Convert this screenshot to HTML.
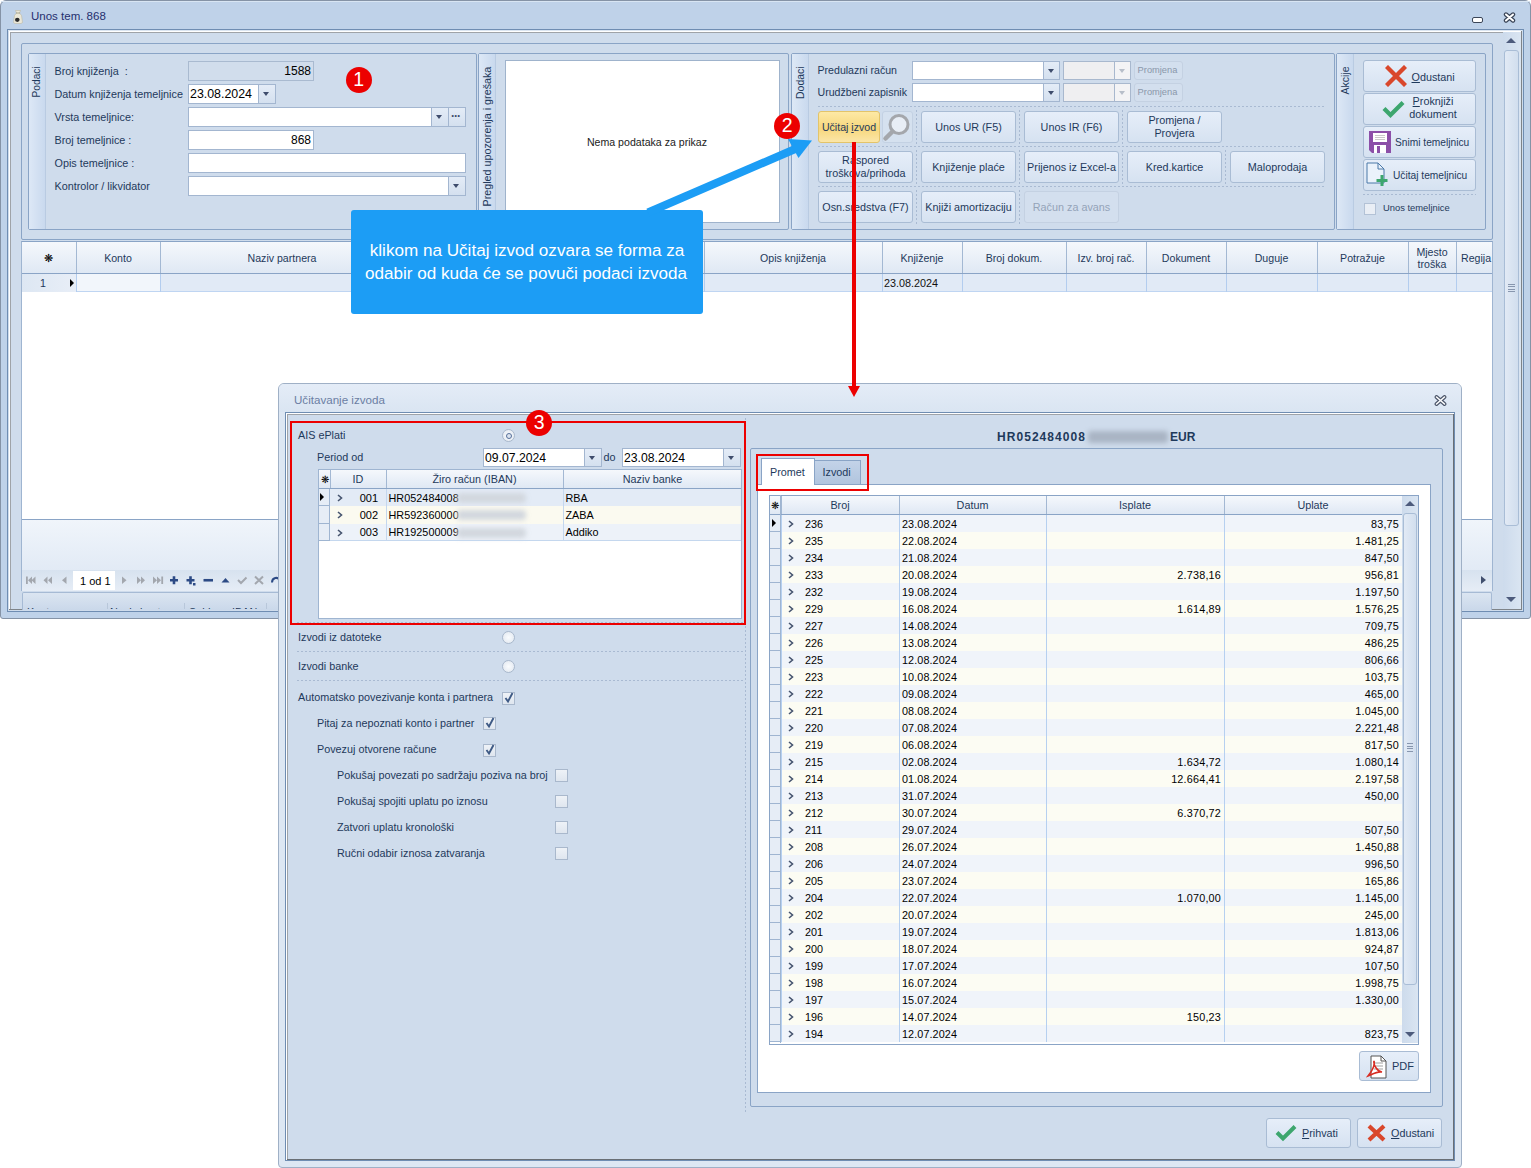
<!DOCTYPE html><html><head><meta charset="utf-8"><style>
*{margin:0;padding:0;box-sizing:border-box}
html,body{width:1531px;height:1168px;overflow:hidden;background:#fff;font-family:"Liberation Sans",sans-serif}
div{position:absolute}
.t{white-space:nowrap}
.btn{border:1px solid #a9bcd4;border-radius:3px;background:linear-gradient(#e6eef9,#d6e2f1)}
.dbtn{border:1px solid #c4d1e2;border-radius:3px;background:#d3dfee}
.side{background:linear-gradient(90deg,#dde8f6,#c9d9ee);border-right:1px solid #b9cbe2}
.inp{background:#fff;border:1px solid #a3b6d0}
.ddb{background:linear-gradient(#e4ecf7,#d4e0ef);border-left:1px solid #a3b6d0}
.tri{width:0;height:0;border-left:3.5px solid transparent;border-right:3.5px solid transparent;border-top:4px solid #3e4c6c}
.hdr{background:linear-gradient(#f5f8fc,#dfe8f4);}
.dashh{height:1px;background:repeating-linear-gradient(90deg,#a9bad2 0 2px,transparent 2px 4px)}
.dashv{width:1px;background:repeating-linear-gradient(180deg,#a9bad2 0 2px,transparent 2px 4px)}
</style></head><body>

<div style="left:0px;top:0px;width:1531px;height:619px;background:#bfd2e9;border:1px solid #8593a6;border-radius:6px 6px 3px 3px;"></div>
<div style="left:1px;top:1px;width:1529px;height:1px;background:#d8e5f3;"></div>
<svg style="position:absolute;left:13px;top:10px" width="10" height="14" viewBox="0 0 10 14"><path d="M2.5 0.5H7.5L6.5 3L8.5 5.5L9.5 12.5L8 13.5H2L0.5 12.5L1.5 5.5L3.5 3Z" fill="#ebe8d8" stroke="#bdb9a3" stroke-width="0.6"/><path d="M3 3H7" stroke="#9b977f" stroke-width="0.8"/><ellipse cx="4.3" cy="9.8" rx="2.3" ry="2.1" fill="#2a2a2a"/></svg>
<div class="t" style="left:31px;top:10.77px;font-size:11.5px;line-height:11.5px;color:#252f6e;">Unos tem. 868</div>
<div style="left:1472px;top:17px;width:11px;height:6px;background:#fff;border:1.3px solid #3b4658;border-radius:2px;"></div>
<svg style="position:absolute;left:1503px;top:12px" width="13" height="11" viewBox="0 0 13 11"><path d="M3 2.5L10 8.5M10 2.5L3 8.5" stroke="#3b4658" stroke-width="4.4" stroke-linecap="round"/><path d="M3 2.5L10 8.5M10 2.5L3 8.5" stroke="#fff" stroke-width="2" stroke-linecap="round"/></svg>
<div style="left:7px;top:29px;width:1517px;height:583px;background:#cfdcec;border:1px solid #6f8db2;"></div>
<div style="left:8px;top:30px;width:1514px;height:1px;background:#dce6f2;"></div>
<div style="left:9px;top:31px;width:1513px;height:1px;background:#fff;"></div>
<div style="left:10px;top:32px;width:1511px;height:1px;background:#9fa3a8;"></div>
<div style="left:9px;top:31px;width:1px;height:579px;background:#fff;"></div>
<div style="left:10px;top:32px;width:1px;height:577px;background:#9fa3a8;"></div>
<div style="left:1521px;top:31px;width:1px;height:579px;background:#7f8489;"></div>
<div style="left:9px;top:609px;width:1513px;height:1px;background:#7f8489;"></div>
<div style="left:21px;top:43px;width:1472px;height:197px;border:1px solid #8aa4c6;border-radius:2px;background:#cfdcec;"></div>
<div style="left:28px;top:53px;width:449px;height:177px;border:1px solid #8aa4c6;border-radius:2px;background:#cfdcec;"></div>
<div class="side" style="left:29px;top:54px;width:17px;height:175px;"></div>
<div class="t" style="left:29px;top:66.5px;width:16px;height:30.5px;"><div class="t" style="left:0;top:0;width:30.5px;height:16px;transform-origin:0 0;transform:translate(-0.5px,30.5px) rotate(-90deg);font-size:10.2px;line-height:16px;color:#1e395b;text-align:right">Podaci</div></div>
<div style="left:478px;top:53px;width:311px;height:177px;border:1px solid #8aa4c6;border-radius:2px;background:#cfdcec;"></div>
<div class="side" style="left:479px;top:54px;width:17px;height:175px;"></div>
<div class="t" style="left:479px;top:66.5px;width:16px;height:139.5px;"><div class="t" style="left:0;top:0;width:139.5px;height:16px;transform-origin:0 0;transform:translate(-0.5px,139.5px) rotate(-90deg);font-size:10.75px;line-height:16px;color:#1e395b;text-align:right">Pregled upozorenja i grešaka</div></div>
<div style="left:791px;top:53px;width:544px;height:177px;border:1px solid #8aa4c6;border-radius:2px;background:#cfdcec;"></div>
<div class="side" style="left:792px;top:54px;width:17px;height:175px;"></div>
<div class="t" style="left:792px;top:66.5px;width:16px;height:32px;"><div class="t" style="left:0;top:0;width:32px;height:16px;transform-origin:0 0;transform:translate(-0.5px,32px) rotate(-90deg);font-size:10.5px;line-height:16px;color:#1e395b;text-align:right">Dodaci</div></div>
<div style="left:1336px;top:53px;width:150px;height:177px;border:1px solid #8aa4c6;border-radius:2px;background:#cfdcec;"></div>
<div class="side" style="left:1337px;top:54px;width:17px;height:175px;"></div>
<div class="t" style="left:1337px;top:66.5px;width:16px;height:27.5px;"><div class="t" style="left:0;top:0;width:27.5px;height:16px;transform-origin:0 0;transform:translate(-0.5px,27.5px) rotate(-90deg);font-size:10.5px;line-height:16px;color:#1e395b;text-align:right">Akcije</div></div>
<div class="t" style="left:54.5px;top:65.86px;font-size:10.8px;line-height:10.8px;color:#1e395b;">Broj knjiženja &nbsp;:</div>
<div class="t" style="left:54.5px;top:88.86px;font-size:10.8px;line-height:10.8px;color:#1e395b;">Datum knjiženja temeljnice</div>
<div class="t" style="left:54.5px;top:111.86px;font-size:10.8px;line-height:10.8px;color:#1e395b;">Vrsta temeljnice:</div>
<div class="t" style="left:54.5px;top:134.86px;font-size:10.8px;line-height:10.8px;color:#1e395b;">Broj temeljnice :</div>
<div class="t" style="left:54.5px;top:157.86px;font-size:10.8px;line-height:10.8px;color:#1e395b;">Opis temeljnice :</div>
<div class="t" style="left:54.5px;top:180.86px;font-size:10.8px;line-height:10.8px;color:#1e395b;">Kontrolor / likvidator</div>
<div style="left:188px;top:61px;width:126px;height:20px;background:#d1ddec;border:1px solid #a9bad0;"></div>
<div class="t" style="left:-89px;width:400px;text-align:right;top:64.84px;font-size:12px;line-height:12px;color:#000;">1588</div>
<div class="inp" style="left:188px;top:84px;width:88px;height:20px;"></div>
<div class="t" style="left:190px;top:87.50px;font-size:12.4px;line-height:12.4px;color:#000;">23.08.2024</div>
<div class="ddb" style="left:258px;top:85px;width:17px;height:18px;"></div>
<div class="tri" style="left:263px;top:92px"></div>
<div class="inp" style="left:188px;top:107px;width:278px;height:20px;"></div>
<div class="ddb" style="left:431px;top:108px;width:17px;height:18px;"></div>
<div class="tri" style="left:436px;top:115px"></div>
<div class="ddb" style="left:448px;top:108px;width:17px;height:18px;"></div>
<div class="t" style="left:451px;top:109.84px;font-size:12px;line-height:12px;color:#3e4c6c;letter-spacing:-1px;font-weight:bold">···</div>
<div class="inp" style="left:188px;top:130px;width:126px;height:20px;"></div>
<div class="t" style="left:-89px;width:400px;text-align:right;top:133.84px;font-size:12px;line-height:12px;color:#000;">868</div>
<div class="inp" style="left:188px;top:153px;width:278px;height:20px;"></div>
<div class="inp" style="left:188px;top:176px;width:278px;height:20px;"></div>
<div class="ddb" style="left:448px;top:177px;width:17px;height:18px;"></div>
<div class="tri" style="left:453px;top:184px"></div>
<div style="left:505px;top:60px;width:275px;height:163px;background:#fff;border:1px solid #9fb3cc;"></div>
<div class="t" style="left:347px;width:600px;text-align:center;top:137.03px;font-size:10.6px;line-height:10.6px;color:#1b1b1b;">Nema podataka za prikaz</div>
<div class="t" style="left:817.5px;top:65.03px;font-size:10.6px;line-height:10.6px;color:#1e395b;">Predulazni račun</div>
<div class="t" style="left:817.5px;top:87.03px;font-size:10.6px;line-height:10.6px;color:#1e395b;">Urudžbeni zapisnik</div>
<div class="inp" style="left:912px;top:61px;width:148px;height:19px;"></div>
<div class="ddb" style="left:1043px;top:62px;width:16px;height:17px;"></div>
<div class="tri" style="left:1047.5px;top:69px"></div>
<div style="left:1063px;top:61px;width:68px;height:19px;background:#efeff1;border:1px solid #a8b8ce;"></div>
<div style="left:1114px;top:62px;width:16px;height:17px;background:#f3f3f5;border-left:1px solid #a8b8ce;"></div>
<div class="tri" style="left:1118.5px;top:69px;border-top-color:#b7bec9"></div>
<div class="dbtn" style="left:1134px;top:61px;width:49px;height:19px;"></div>
<div class="t" style="left:857.5px;width:600px;text-align:center;top:65.93px;font-size:9.3px;line-height:9.3px;color:#8a97aa;">Promjena</div>
<div class="inp" style="left:912px;top:83px;width:148px;height:19px;"></div>
<div class="ddb" style="left:1043px;top:84px;width:16px;height:17px;"></div>
<div class="tri" style="left:1047.5px;top:91px"></div>
<div style="left:1063px;top:83px;width:68px;height:19px;background:#efeff1;border:1px solid #a8b8ce;"></div>
<div style="left:1114px;top:84px;width:16px;height:17px;background:#f3f3f5;border-left:1px solid #a8b8ce;"></div>
<div class="tri" style="left:1118.5px;top:91px;border-top-color:#b7bec9"></div>
<div class="dbtn" style="left:1134px;top:83px;width:49px;height:19px;"></div>
<div class="t" style="left:857.5px;width:600px;text-align:center;top:87.93px;font-size:9.3px;line-height:9.3px;color:#8a97aa;">Promjena</div>
<div class="dashh" style="left:818px;top:106px;width:508px"></div>
<div class="dashh" style="left:818px;top:146px;width:508px"></div>
<div class="dashh" style="left:818px;top:186px;width:508px"></div>
<div class="dashv" style="left:916px;top:110px;height:34px"></div>
<div class="dashv" style="left:1019px;top:110px;height:34px"></div>
<div class="dashv" style="left:1122px;top:110px;height:34px"></div>
<div class="dashv" style="left:916px;top:150px;height:34px"></div>
<div class="dashv" style="left:1019px;top:150px;height:34px"></div>
<div class="dashv" style="left:1122px;top:150px;height:34px"></div>
<div class="dashv" style="left:1225px;top:150px;height:34px"></div>
<div class="dashv" style="left:916px;top:190px;height:34px"></div>
<div class="dashv" style="left:1019px;top:190px;height:34px"></div>
<div style="left:818px;top:111px;width:62px;height:32px;border:1px solid #e3c46a;border-radius:3px;background:linear-gradient(#fde9a6,#f7d77c 55%,#fbe6a8);"></div>
<div class="t" style="left:549px;width:600px;text-align:center;top:122.03px;font-size:10.6px;line-height:10.6px;color:#1e395b;text-decoration:none">Učitaj <u>i</u>zvod</div>
<div style="left:882px;top:111px;width:31px;height:32px;border:1px solid #c3d1e3;border-radius:3px;background:#d5e1ef;"></div>
<svg style="position:absolute;left:882px;top:111px" width="31" height="32" viewBox="0 0 31 32"><circle cx="17" cy="13.5" r="9" fill="#e8eef6" stroke="#a4a7ac" stroke-width="3"/><path d="M10.5 20.5L3.5 27.5" stroke="#a4a7ac" stroke-width="4.5" stroke-linecap="round"/></svg>
<div class="btn" style="left:921px;top:111px;width:95px;height:32px;"></div>
<div class="t" style="left:668.5px;width:600px;text-align:center;top:121.86px;font-size:10.8px;line-height:10.8px;color:#1e395b;">Unos UR (F5)</div>
<div class="btn" style="left:1024px;top:111px;width:95px;height:32px;"></div>
<div class="t" style="left:771.5px;width:600px;text-align:center;top:121.86px;font-size:10.8px;line-height:10.8px;color:#1e395b;">Unos IR (F6)</div>
<div class="btn" style="left:1127px;top:111px;width:95px;height:32px;"></div>
<div class="t" style="left:874.5px;width:600px;text-align:center;top:115.36px;font-size:10.8px;line-height:10.8px;color:#1e395b;">Promjena /</div>
<div class="t" style="left:874.5px;width:600px;text-align:center;top:127.86px;font-size:10.8px;line-height:10.8px;color:#1e395b;">Provjera</div>
<div class="btn" style="left:818px;top:151px;width:95px;height:32px;"></div>
<div class="t" style="left:565.5px;width:600px;text-align:center;top:155.36px;font-size:10.8px;line-height:10.8px;color:#1e395b;">Raspored</div>
<div class="t" style="left:565.5px;width:600px;text-align:center;top:167.86px;font-size:10.8px;line-height:10.8px;color:#1e395b;">troškova/prihoda</div>
<div class="btn" style="left:921px;top:151px;width:95px;height:32px;"></div>
<div class="t" style="left:668.5px;width:600px;text-align:center;top:161.86px;font-size:10.8px;line-height:10.8px;color:#1e395b;">Knjiženje plaće</div>
<div class="btn" style="left:1024px;top:151px;width:95px;height:32px;"></div>
<div class="t" style="left:771.5px;width:600px;text-align:center;top:161.86px;font-size:10.8px;line-height:10.8px;color:#1e395b;">Prijenos iz Excel-a</div>
<div class="btn" style="left:1127px;top:151px;width:95px;height:32px;"></div>
<div class="t" style="left:874.5px;width:600px;text-align:center;top:161.86px;font-size:10.8px;line-height:10.8px;color:#1e395b;">Kred.kartice</div>
<div class="btn" style="left:1230px;top:151px;width:95px;height:32px;"></div>
<div class="t" style="left:977.5px;width:600px;text-align:center;top:161.86px;font-size:10.8px;line-height:10.8px;color:#1e395b;">Maloprodaja</div>
<div class="btn" style="left:818px;top:191px;width:95px;height:32px;"></div>
<div class="t" style="left:565.5px;width:600px;text-align:center;top:201.86px;font-size:10.8px;line-height:10.8px;color:#1e395b;">Osn.sredstva (F7)</div>
<div class="btn" style="left:921px;top:191px;width:95px;height:32px;"></div>
<div class="t" style="left:668.5px;width:600px;text-align:center;top:201.86px;font-size:10.8px;line-height:10.8px;color:#1e395b;">Knjiži amortizaciju</div>
<div class="dbtn" style="left:1024px;top:191px;width:95px;height:32px;"></div>
<div class="t" style="left:771.5px;width:600px;text-align:center;top:201.86px;font-size:10.8px;line-height:10.8px;color:#93a3b8;">Račun za avans</div>
<div class="btn" style="left:1363px;top:60px;width:113px;height:32px;"></div>
<div class="btn" style="left:1363px;top:93px;width:113px;height:32px;"></div>
<div class="btn" style="left:1363px;top:126px;width:113px;height:32px;"></div>
<div class="btn" style="left:1363px;top:159px;width:113px;height:32px;"></div>
<svg style="position:absolute;left:1385px;top:65px" width="22" height="22" viewBox="0 0 22 22"><path d="M3 3L19 19M19 3L3 19" stroke="#d9472b" stroke-width="4.3" stroke-linecap="square"/></svg>
<div class="t" style="left:1411.5px;top:71.86px;font-size:10.8px;line-height:10.8px;color:#1e395b;"><u>O</u>dustani</div>
<svg style="position:absolute;left:1382px;top:100px" width="23" height="18" viewBox="0 0 23 18"><path d="M2 8.5L8.5 15L21 2.5" fill="none" stroke="#3da66e" stroke-width="4.2"/></svg>
<div class="t" style="left:1133px;width:600px;text-align:center;top:96.36px;font-size:10.8px;line-height:10.8px;color:#1e395b;"><u>P</u>roknjiži</div>
<div class="t" style="left:1133px;width:600px;text-align:center;top:108.86px;font-size:10.8px;line-height:10.8px;color:#1e395b;">dokument</div>
<svg style="position:absolute;left:1369px;top:131px" width="22" height="22" viewBox="0 0 22 22"><path d="M0 0H22V22H3L0 19Z" fill="#8c4fa8"/><rect x="4" y="2" width="14" height="9" fill="#fff"/><path d="M6 4.5H16M6 6.5H16M6 8.5H16" stroke="#bbb" stroke-width="0.8"/><rect x="5" y="14" width="12" height="8" fill="#fff"/><rect x="8" y="15" width="3" height="7" fill="#8c4fa8"/></svg>
<div class="t" style="left:1395px;top:137.87px;font-size:10.2px;line-height:10.2px;color:#1e395b;">Snimi temeljnicu</div>
<svg style="position:absolute;left:1366px;top:162px" width="24" height="25" viewBox="0 0 24 25"><path d="M1 1H12L18 7V21H1Z" fill="#eaf2fb" stroke="#4a78a8" stroke-width="1"/><path d="M12 1V7H18" fill="none" stroke="#4a78a8" stroke-width="1"/><path d="M16 13V24M10.5 18.5H21.5" stroke="#3da66e" stroke-width="3"/></svg>
<div class="t" style="left:1393px;top:170.87px;font-size:10.2px;line-height:10.2px;color:#1e395b;">Učitaj temeljnicu</div>
<div class="dashh" style="left:1363px;top:194px;width:113px"></div>
<div style="left:1364px;top:203px;width:12px;height:12px;background:#e9eef5;border:1px solid #b3c2d6;"></div>
<div class="t" style="left:1383px;top:203.04px;font-size:9.4px;line-height:9.4px;color:#1e395b;">Unos temeljnice</div>
<div style="left:1503px;top:32px;width:18px;height:577px;background:linear-gradient(90deg,#cddbec,#dae5f2);"></div>
<div style="left:1506px;top:38px;width:0;height:0;border-left:5.5px solid transparent;border-right:5.5px solid transparent;border-bottom:5px solid #4d5b7c"></div>
<div style="left:1504px;top:50px;width:15px;height:476px;background:linear-gradient(90deg,#e2eaf5,#d1deee);border:1px solid #a9bdd6;border-radius:3px;"></div>
<div style="left:1508px;top:283.5px;width:7px;height:1px;background:#8796ae;"></div>
<div style="left:1508px;top:286.0px;width:7px;height:1px;background:#8796ae;"></div>
<div style="left:1508px;top:288.5px;width:7px;height:1px;background:#8796ae;"></div>
<div style="left:1508px;top:291.0px;width:7px;height:1px;background:#8796ae;"></div>
<div style="left:1506px;top:597px;width:0;height:0;border-left:5.5px solid transparent;border-right:5.5px solid transparent;border-top:5px solid #4d5b7c"></div>
<div style="left:21px;top:241px;width:1472px;height:350px;background:#fff;border:1px solid #9fb5d1;border-top:1px solid #8aa4c6"></div>
<div class="hdr" style="left:22px;top:242px;width:1470px;height:31px;"></div>
<div style="left:22px;top:273px;width:1470px;height:1px;background:#8aa4c6;"></div>
<div style="left:76px;top:242px;width:1px;height:31px;background:#a3b8d3;"></div>
<div style="left:160px;top:242px;width:1px;height:31px;background:#a3b8d3;"></div>
<div style="left:404px;top:242px;width:1px;height:31px;background:#a3b8d3;"></div>
<div style="left:704px;top:242px;width:1px;height:31px;background:#a3b8d3;"></div>
<div style="left:882px;top:242px;width:1px;height:31px;background:#a3b8d3;"></div>
<div style="left:962px;top:242px;width:1px;height:31px;background:#a3b8d3;"></div>
<div style="left:1066px;top:242px;width:1px;height:31px;background:#a3b8d3;"></div>
<div style="left:1146px;top:242px;width:1px;height:31px;background:#a3b8d3;"></div>
<div style="left:1226px;top:242px;width:1px;height:31px;background:#a3b8d3;"></div>
<div style="left:1317px;top:242px;width:1px;height:31px;background:#a3b8d3;"></div>
<div style="left:1408px;top:242px;width:1px;height:31px;background:#a3b8d3;"></div>
<div style="left:1456px;top:242px;width:1px;height:31px;background:#a3b8d3;"></div>
<div class="t" style="left:-251.5px;width:600px;text-align:center;top:252.69px;font-size:11px;line-height:11px;color:#000;">❋</div>
<div class="t" style="left:-182.0px;width:600px;text-align:center;top:253.03px;font-size:10.6px;line-height:10.6px;color:#1e395b;">Konto</div>
<div class="t" style="left:-18.0px;width:600px;text-align:center;top:253.03px;font-size:10.6px;line-height:10.6px;color:#1e395b;">Naziv partnera</div>
<div class="t" style="left:493.0px;width:600px;text-align:center;top:253.03px;font-size:10.6px;line-height:10.6px;color:#1e395b;">Opis knjiženja</div>
<div class="t" style="left:622.0px;width:600px;text-align:center;top:253.03px;font-size:10.6px;line-height:10.6px;color:#1e395b;">Knjiženje</div>
<div class="t" style="left:714.0px;width:600px;text-align:center;top:253.03px;font-size:10.6px;line-height:10.6px;color:#1e395b;">Broj dokum.</div>
<div class="t" style="left:806.0px;width:600px;text-align:center;top:253.03px;font-size:10.6px;line-height:10.6px;color:#1e395b;">Izv. broj rač.</div>
<div class="t" style="left:886.0px;width:600px;text-align:center;top:253.03px;font-size:10.6px;line-height:10.6px;color:#1e395b;">Dokument</div>
<div class="t" style="left:971.5px;width:600px;text-align:center;top:253.03px;font-size:10.6px;line-height:10.6px;color:#1e395b;">Duguje</div>
<div class="t" style="left:1062.5px;width:600px;text-align:center;top:253.03px;font-size:10.6px;line-height:10.6px;color:#1e395b;">Potražuje</div>
<div class="t" style="left:1461px;top:253.03px;font-size:10.6px;line-height:10.6px;color:#1e395b;">Regija</div>
<div class="t" style="left:1132px;width:600px;text-align:center;top:247.03px;font-size:10.6px;line-height:10.6px;color:#1e395b;">Mjesto</div>
<div class="t" style="left:1132px;width:600px;text-align:center;top:259.03px;font-size:10.6px;line-height:10.6px;color:#1e395b;">troška</div>
<div style="left:22px;top:274px;width:1470px;height:18px;background:#e1eaf6;border-bottom:1px solid #bfd5f2"></div>
<div style="left:22px;top:274px;width:54px;height:18px;background:linear-gradient(90deg,#dde7f3,#e8eef7);"></div>
<div style="left:77px;top:274px;width:83px;height:17px;background:#f2f6fb;"></div>
<div style="left:76px;top:274px;width:1px;height:18px;background:#b3cdef;"></div>
<div style="left:160px;top:274px;width:1px;height:18px;background:#b3cdef;"></div>
<div style="left:404px;top:274px;width:1px;height:18px;background:#b3cdef;"></div>
<div style="left:704px;top:274px;width:1px;height:18px;background:#b3cdef;"></div>
<div style="left:882px;top:274px;width:1px;height:18px;background:#b3cdef;"></div>
<div style="left:962px;top:274px;width:1px;height:18px;background:#b3cdef;"></div>
<div style="left:1066px;top:274px;width:1px;height:18px;background:#b3cdef;"></div>
<div style="left:1146px;top:274px;width:1px;height:18px;background:#b3cdef;"></div>
<div style="left:1226px;top:274px;width:1px;height:18px;background:#b3cdef;"></div>
<div style="left:1317px;top:274px;width:1px;height:18px;background:#b3cdef;"></div>
<div style="left:1408px;top:274px;width:1px;height:18px;background:#b3cdef;"></div>
<div style="left:1456px;top:274px;width:1px;height:18px;background:#b3cdef;"></div>
<div class="t" style="left:40px;top:278.03px;font-size:10.6px;line-height:10.6px;color:#1e395b;">1</div>
<div style="left:70px;top:279px;width:0;height:0;border-top:4px solid transparent;border-bottom:4px solid transparent;border-left:4px solid #000"></div>
<div class="t" style="left:884px;top:277.86px;font-size:10.8px;line-height:10.8px;color:#111;">23.08.2024</div>
<div style="left:22px;top:519px;width:1470px;height:1px;background:#8aa4c6;"></div>
<div style="left:22px;top:520px;width:1470px;height:71px;background:linear-gradient(#f0f5fb,#dfe8f4 85%,#d3dfee);"></div>
<div style="left:22px;top:570px;width:1470px;height:21px;background:linear-gradient(#d7e2ef,#e6edf6);"></div>
<div style="left:73px;top:571px;width:42px;height:19px;background:#fff;"></div>
<div class="t" style="left:80px;top:575.69px;font-size:11px;line-height:11px;color:#000;">1 od 1</div>
<svg style="position:absolute;left:22px;top:570px" width="262" height="21" viewBox="0 0 262 21">
<rect x="4" y="6.5" width="1.8" height="7.5" fill="#a3a7ae"/><path d="M10 6.5V14L6 10.25Z M13.5 6.5V14L9.5 10.25Z" fill="#a3a7ae"/>
<path d="M25.5 6.5V14L21.5 10.25Z M30 6.5V14L26 10.25Z" fill="#a3a7ae"/>
<path d="M44.5 6.5V14L40 10.25Z" fill="#a3a7ae"/>
<path d="M100 6.5V14L104.5 10.25Z" fill="#a3a7ae"/>
<path d="M115 6.5V14L119 10.25Z M119 6.5V14L123 10.25Z" fill="#a3a7ae"/>
<path d="M131 6.5V14L135 10.25Z M135 6.5V14L139 10.25Z" fill="#a3a7ae"/><rect x="139.3" y="6.5" width="1.8" height="7.5" fill="#a3a7ae"/>
<path d="M148 10.25H156M152 6.25V14.25" stroke="#2c4a85" stroke-width="2.6"/>
<path d="M164.5 10.25H172.5M168.5 6.25V14.25" stroke="#2c4a85" stroke-width="2.6"/><rect x="171" y="13" width="2.5" height="2.5" fill="#2c4a85"/>
<path d="M181.5 10.25H191" stroke="#2c4a85" stroke-width="2.6"/>
<path d="M199.5 12.5L203.5 8L207.5 12.5Z" fill="#2c4a85"/>
<path d="M216 10L219 13L224.5 7.5" fill="none" stroke="#a3a7ae" stroke-width="2"/>
<path d="M233 6.5L241 14M241 6.5L233 14" stroke="#a3a7ae" stroke-width="2"/>
<path d="M250 12.5C250 7.5 256 6.5 258 10" fill="none" stroke="#2c4a85" stroke-width="2"/><path d="M256 11L260.5 11.5L259.5 7Z" fill="#2c4a85"/>
</svg>
<div style="left:1481px;top:576px;width:0;height:0;border-top:4.5px solid transparent;border-bottom:4.5px solid transparent;border-left:5px solid #414f6e"></div>
<div style="left:22px;top:592px;width:1470px;height:18px;background:linear-gradient(#dbe5f1,#cad8ea);border:1px solid #a6bad4;border-bottom:none;border-radius:2px 2px 0 0;"></div>
<div style="left:22px;top:607px;width:1470px;height:2px;overflow:hidden"><div class="t" style="left:5px;top:-1px;font-size:10.8px;line-height:12px;color:#1e395b">Konto</div><div class="t" style="left:88px;top:-1px;font-size:10.8px;line-height:12px;color:#1e395b">Naziv konta</div><div class="t" style="left:167px;top:-1px;font-size:10.8px;line-height:12px;color:#1e395b">Saldo</div><div class="t" style="left:210px;top:-1px;font-size:10.8px;line-height:12px;color:#1e395b">IBAN</div></div>
<div style="left:107px;top:603px;width:1px;height:6px;background:#b8c7da;"></div>
<div style="left:184px;top:603px;width:1px;height:6px;background:#b8c7da;"></div>
<div style="left:266px;top:603px;width:1px;height:6px;background:#b8c7da;"></div>
<div style="left:278px;top:383px;width:1184px;height:785px;background:#dde7f3;border:1px solid #9fb0c6;border-radius:6px 6px 4px 4px;"></div>
<div style="left:279px;top:384px;width:1182px;height:28px;background:linear-gradient(#e4ecf7,#dae5f2);border-radius:5px 5px 0 0;"></div>
<div class="t" style="left:294px;top:394.18px;font-size:11.6px;line-height:11.6px;color:#6b7ea3;">Učitavanje izvoda</div>
<svg style="position:absolute;left:1434px;top:395px" width="13" height="11" viewBox="0 0 13 11"><path d="M2.5 2L10.5 9M10.5 2L2.5 9" stroke="#4a5468" stroke-width="3.8" stroke-linecap="round"/><path d="M2.5 2L10.5 9M10.5 2L2.5 9" stroke="#fff" stroke-width="1.6" stroke-linecap="round"/></svg>
<div style="left:285px;top:412px;width:1170px;height:749px;background:#cfdcec;border:1px solid #6f8db2;"></div>
<div style="left:286px;top:413px;width:1168px;height:1px;background:#fff;"></div>
<div style="left:286px;top:414px;width:1168px;height:1px;background:#9fa3a8;"></div>
<div style="left:286px;top:413px;width:1px;height:747px;background:#fff;"></div>
<div style="left:287px;top:414px;width:1px;height:746px;background:#9fa3a8;"></div>
<div style="left:1453px;top:414px;width:1px;height:746px;background:#6a6f75;"></div>
<div style="left:287px;top:1159px;width:1167px;height:1px;background:#6a6f75;"></div>
<div class="t" style="left:298px;top:429.86px;font-size:10.8px;line-height:10.8px;color:#1e395b;">AIS ePlati</div>
<div style="left:502.0px;top:429.0px;width:13px;height:13px;border-radius:50%;border:1px solid #a9b8cc;background:radial-gradient(#fafcfe,#dfe6ef)"></div>
<div style="left:505.5px;top:432.5px;width:6px;height:6px;border-radius:50%;border:1.3px solid #56709a;background:#dbe4f0"></div>
<div class="t" style="left:317px;top:451.86px;font-size:10.8px;line-height:10.8px;color:#1e395b;">Period od</div>
<div class="inp" style="left:483px;top:448px;width:119px;height:19px;"></div>
<div class="ddb" style="left:584px;top:449px;width:17px;height:17px;"></div>
<div class="tri" style="left:589px;top:456px"></div>
<div class="inp" style="left:622px;top:448px;width:119px;height:19px;"></div>
<div class="ddb" style="left:723px;top:449px;width:17px;height:17px;"></div>
<div class="tri" style="left:728px;top:456px"></div>
<div class="t" style="left:485px;top:451.67px;font-size:12.2px;line-height:12.2px;color:#000;">09.07.2024</div>
<div class="t" style="left:603.5px;top:451.86px;font-size:10.8px;line-height:10.8px;color:#1e395b;">do</div>
<div class="t" style="left:624px;top:451.67px;font-size:12.2px;line-height:12.2px;color:#000;">23.08.2024</div>
<div style="left:318px;top:469px;width:424px;height:150px;background:#fff;border:1px solid #9fb5d1;"></div>
<div class="hdr" style="left:319px;top:470px;width:422px;height:18px;"></div>
<div style="left:319px;top:488px;width:422px;height:1px;background:#8aa4c6;"></div>
<div style="left:330px;top:470px;width:1px;height:18px;background:#a3b8d3;"></div>
<div style="left:386px;top:470px;width:1px;height:18px;background:#a3b8d3;"></div>
<div style="left:563px;top:470px;width:1px;height:18px;background:#a3b8d3;"></div>
<div class="t" style="left:24.5px;width:600px;text-align:center;top:474.54px;font-size:10px;line-height:10px;color:#000;">❋</div>
<div class="t" style="left:58px;width:600px;text-align:center;top:473.86px;font-size:10.8px;line-height:10.8px;color:#1e395b;">ID</div>
<div class="t" style="left:174.5px;width:600px;text-align:center;top:473.86px;font-size:10.8px;line-height:10.8px;color:#1e395b;">Žiro račun (IBAN)</div>
<div class="t" style="left:352.5px;width:600px;text-align:center;top:473.86px;font-size:10.8px;line-height:10.8px;color:#1e395b;">Naziv banke</div>
<div style="left:330px;top:489.0px;width:411px;height:17.3px;background:#e3ebf6;"></div>
<div style="left:319px;top:489.0px;width:11px;height:17.3px;background:#e6edf6;border-bottom:1px solid #9fb5d1;border-right:1px solid #9fb5d1;"></div>
<div style="left:386px;top:489.0px;width:1px;height:17.3px;background:#c4d7ee;"></div>
<div style="left:563px;top:489.0px;width:1px;height:17.3px;background:#c4d7ee;"></div>
<svg style="position:absolute;left:337px;top:494.0px" width="6" height="8" viewBox="0 0 6 8"><path d="M1 1L4.5 4L1 7" fill="none" stroke="#46546f" stroke-width="1.6"/></svg>
<div class="t" style="left:-22px;width:400px;text-align:right;top:492.69px;font-size:11px;line-height:11px;color:#000;">001</div>
<div class="t" style="left:388.5px;top:492.86px;font-size:10.8px;line-height:10.8px;color:#000;letter-spacing:0.05px">HR052484008</div>
<div style="left:457px;top:493.0px;width:69px;height:10px;background:#d2d7de;filter:blur(2.5px);border-radius:4px"></div>
<div class="t" style="left:565.5px;top:492.86px;font-size:10.8px;line-height:10.8px;color:#000;">RBA</div>
<div style="left:330px;top:506.3px;width:411px;height:17.3px;background:#fbfaf0;"></div>
<div style="left:319px;top:506.3px;width:11px;height:17.3px;background:#e6edf6;border-bottom:1px solid #9fb5d1;border-right:1px solid #9fb5d1;"></div>
<div style="left:386px;top:506.3px;width:1px;height:17.3px;background:#c4d7ee;"></div>
<div style="left:563px;top:506.3px;width:1px;height:17.3px;background:#c4d7ee;"></div>
<svg style="position:absolute;left:337px;top:511.3px" width="6" height="8" viewBox="0 0 6 8"><path d="M1 1L4.5 4L1 7" fill="none" stroke="#46546f" stroke-width="1.6"/></svg>
<div class="t" style="left:-22px;width:400px;text-align:right;top:509.99px;font-size:11px;line-height:11px;color:#000;">002</div>
<div class="t" style="left:388.5px;top:510.16px;font-size:10.8px;line-height:10.8px;color:#000;letter-spacing:0.05px">HR592360000</div>
<div style="left:457px;top:510.3px;width:69px;height:10px;background:#d2d7de;filter:blur(2.5px);border-radius:4px"></div>
<div class="t" style="left:565.5px;top:510.16px;font-size:10.8px;line-height:10.8px;color:#000;">ZABA</div>
<div style="left:330px;top:523.6px;width:411px;height:17.3px;background:#edf2f9;"></div>
<div style="left:319px;top:523.6px;width:11px;height:17.3px;background:#e6edf6;border-bottom:1px solid #9fb5d1;border-right:1px solid #9fb5d1;"></div>
<div style="left:386px;top:523.6px;width:1px;height:17.3px;background:#c4d7ee;"></div>
<div style="left:563px;top:523.6px;width:1px;height:17.3px;background:#c4d7ee;"></div>
<svg style="position:absolute;left:337px;top:528.6px" width="6" height="8" viewBox="0 0 6 8"><path d="M1 1L4.5 4L1 7" fill="none" stroke="#46546f" stroke-width="1.6"/></svg>
<div class="t" style="left:-22px;width:400px;text-align:right;top:527.29px;font-size:11px;line-height:11px;color:#000;">003</div>
<div class="t" style="left:388.5px;top:527.46px;font-size:10.8px;line-height:10.8px;color:#000;letter-spacing:0.05px">HR192500009</div>
<div style="left:457px;top:527.6px;width:69px;height:10px;background:#d2d7de;filter:blur(2.5px);border-radius:4px"></div>
<div class="t" style="left:565.5px;top:527.46px;font-size:10.8px;line-height:10.8px;color:#000;">Addiko</div>
<div style="left:330px;top:540px;width:411px;height:1px;background:#c4d7ee;"></div>
<div style="left:320px;top:493px;width:0;height:0;border-top:4px solid transparent;border-bottom:4px solid transparent;border-left:4px solid #000"></div>
<div class="dashh" style="left:297px;top:622px;width:448px"></div>
<div class="dashh" style="left:297px;top:651px;width:448px"></div>
<div class="dashh" style="left:297px;top:680px;width:448px"></div>
<div class="dashv" style="left:745px;top:418px;height:694px"></div>
<div class="t" style="left:298px;top:631.86px;font-size:10.8px;line-height:10.8px;color:#1e395b;">Izvodi iz datoteke</div>
<div style="left:502.0px;top:631.0px;width:13px;height:13px;border-radius:50%;border:1px solid #a9b8cc;background:radial-gradient(#fafcfe,#dfe6ef)"></div>
<div class="t" style="left:298px;top:660.86px;font-size:10.8px;line-height:10.8px;color:#1e395b;">Izvodi banke</div>
<div style="left:502.0px;top:660.0px;width:13px;height:13px;border-radius:50%;border:1px solid #a9b8cc;background:radial-gradient(#fafcfe,#dfe6ef)"></div>
<div class="t" style="left:298px;top:691.86px;font-size:10.8px;line-height:10.8px;color:#1e395b;">Automatsko povezivanje konta i partnera</div>
<div style="left:502px;top:691.5px;width:13px;height:13px;border:1px solid #a9b8cc;background:linear-gradient(#eef2f7,#dfe6ef)"></div>
<svg style="position:absolute;left:503px;top:690.5px" width="12" height="13" viewBox="0 0 12 13"><path d="M2.5 7L5 10.5L9.5 2" fill="none" stroke="#3e5a85" stroke-width="1.9"/></svg>
<div class="t" style="left:317px;top:717.86px;font-size:10.8px;line-height:10.8px;color:#1e395b;">Pitaj za nepoznati konto i partner</div>
<div style="left:483px;top:717px;width:13px;height:13px;border:1px solid #a9b8cc;background:linear-gradient(#eef2f7,#dfe6ef)"></div>
<svg style="position:absolute;left:484px;top:716px" width="12" height="13" viewBox="0 0 12 13"><path d="M2.5 7L5 10.5L9.5 2" fill="none" stroke="#3e5a85" stroke-width="1.9"/></svg>
<div class="t" style="left:317px;top:743.86px;font-size:10.8px;line-height:10.8px;color:#1e395b;">Povezuj otvorene račune</div>
<div style="left:483px;top:743.5px;width:13px;height:13px;border:1px solid #a9b8cc;background:linear-gradient(#eef2f7,#dfe6ef)"></div>
<svg style="position:absolute;left:484px;top:742.5px" width="12" height="13" viewBox="0 0 12 13"><path d="M2.5 7L5 10.5L9.5 2" fill="none" stroke="#3e5a85" stroke-width="1.9"/></svg>
<div class="t" style="left:337px;top:769.86px;font-size:10.8px;line-height:10.8px;color:#1e395b;">Pokušaj povezati po sadržaju poziva na broj</div>
<div style="left:555px;top:769px;width:13px;height:13px;border:1px solid #a9b8cc;background:linear-gradient(#eef2f7,#dfe6ef)"></div>
<div class="t" style="left:337px;top:795.86px;font-size:10.8px;line-height:10.8px;color:#1e395b;">Pokušaj spojiti uplatu po iznosu</div>
<div style="left:555px;top:795px;width:13px;height:13px;border:1px solid #a9b8cc;background:linear-gradient(#eef2f7,#dfe6ef)"></div>
<div class="t" style="left:337px;top:821.86px;font-size:10.8px;line-height:10.8px;color:#1e395b;">Zatvori uplatu kronološki</div>
<div style="left:555px;top:821px;width:13px;height:13px;border:1px solid #a9b8cc;background:linear-gradient(#eef2f7,#dfe6ef)"></div>
<div class="t" style="left:337px;top:847.86px;font-size:10.8px;line-height:10.8px;color:#1e395b;">Ručni odabir iznosa zatvaranja</div>
<div style="left:555px;top:847px;width:13px;height:13px;border:1px solid #a9b8cc;background:linear-gradient(#eef2f7,#dfe6ef)"></div>
<div class="t" style="left:997px;top:430.84px;font-size:12px;line-height:12px;color:#1e395b;font-weight:bold;letter-spacing:1.05px">HR052484008</div>
<div style="left:1088px;top:431px;width:80px;height:12px;background:#a9b4c4;filter:blur(2.5px);border-radius:3px"></div>
<div class="t" style="left:1170px;top:430.84px;font-size:12px;line-height:12px;color:#1e395b;font-weight:bold;">EUR</div>
<div style="left:750px;top:448px;width:693px;height:659px;border:1px solid #8aa4c6;border-radius:2px;"></div>
<div style="left:814px;top:460px;width:47px;height:25px;background:linear-gradient(#c3d3e8,#b0c4de);border:1px solid #8aa4c6;border-bottom:none;"></div>
<div class="t" style="left:822.5px;top:467.36px;font-size:10.8px;line-height:10.8px;color:#1e395b;">Izvodi</div>
<div style="left:757px;top:484px;width:674px;height:609px;background:#fff;border:1px solid #8aa4c6;"></div>
<div style="left:761px;top:458px;width:54px;height:27px;background:#fff;border:1px solid #8aa4c6;border-bottom:none;"></div>
<div class="t" style="left:770px;top:466.86px;font-size:10.8px;line-height:10.8px;color:#1e395b;">Promet</div>
<div style="left:769px;top:495px;width:650px;height:550px;background:#fff;border:1px solid #8aa4c6;"></div>
<div class="hdr" style="left:770px;top:496px;width:632px;height:18px;"></div>
<div style="left:770px;top:514px;width:632px;height:1px;background:#8aa4c6;"></div>
<div style="left:781px;top:496px;width:1px;height:18px;background:#a3b8d3;"></div>
<div style="left:899px;top:496px;width:1px;height:18px;background:#a3b8d3;"></div>
<div style="left:1046px;top:496px;width:1px;height:18px;background:#a3b8d3;"></div>
<div style="left:1224px;top:496px;width:1px;height:18px;background:#a3b8d3;"></div>
<div class="t" style="left:475px;width:600px;text-align:center;top:500.54px;font-size:10px;line-height:10px;color:#000;">❋</div>
<div class="t" style="left:540px;width:600px;text-align:center;top:499.86px;font-size:10.8px;line-height:10.8px;color:#1e395b;">Broj</div>
<div class="t" style="left:672.5px;width:600px;text-align:center;top:499.86px;font-size:10.8px;line-height:10.8px;color:#1e395b;">Datum</div>
<div class="t" style="left:835px;width:600px;text-align:center;top:499.86px;font-size:10.8px;line-height:10.8px;color:#1e395b;">Isplate</div>
<div class="t" style="left:1013px;width:600px;text-align:center;top:499.86px;font-size:10.8px;line-height:10.8px;color:#1e395b;">Uplate</div>
<div style="left:781px;top:515px;width:621px;height:17px;background:#f0f4fa;"></div>
<div style="left:770px;top:515px;width:11px;height:17px;background:#e6edf6;border-bottom:1px solid #9fb5d1;"></div>
<div style="left:781px;top:515px;width:1px;height:17px;background:#b6d0f0;"></div>
<div style="left:899px;top:515px;width:1px;height:17px;background:#b6d0f0;"></div>
<div style="left:1046px;top:515px;width:1px;height:17px;background:#b6d0f0;"></div>
<div style="left:1224px;top:515px;width:1px;height:17px;background:#b6d0f0;"></div>
<svg style="position:absolute;left:788px;top:520px" width="6" height="8" viewBox="0 0 6 8"><path d="M1 1L4.5 4L1 7" fill="none" stroke="#46546f" stroke-width="1.6"/></svg>
<div class="t" style="left:805px;top:518.86px;font-size:10.8px;line-height:10.8px;color:#000;">236</div>
<div class="t" style="left:902px;top:518.86px;font-size:10.8px;line-height:10.8px;color:#000;letter-spacing:0.1px">23.08.2024</div>
<div class="t" style="left:999px;width:400px;text-align:right;top:518.86px;font-size:10.8px;line-height:10.8px;color:#000;letter-spacing:0.2px">83,75</div>
<div style="left:781px;top:532px;width:621px;height:17px;background:#fcfcf3;"></div>
<div style="left:770px;top:532px;width:11px;height:17px;background:#e6edf6;border-bottom:1px solid #9fb5d1;"></div>
<div style="left:781px;top:532px;width:1px;height:17px;background:#b6d0f0;"></div>
<div style="left:899px;top:532px;width:1px;height:17px;background:#b6d0f0;"></div>
<div style="left:1046px;top:532px;width:1px;height:17px;background:#b6d0f0;"></div>
<div style="left:1224px;top:532px;width:1px;height:17px;background:#b6d0f0;"></div>
<svg style="position:absolute;left:788px;top:537px" width="6" height="8" viewBox="0 0 6 8"><path d="M1 1L4.5 4L1 7" fill="none" stroke="#46546f" stroke-width="1.6"/></svg>
<div class="t" style="left:805px;top:535.86px;font-size:10.8px;line-height:10.8px;color:#000;">235</div>
<div class="t" style="left:902px;top:535.86px;font-size:10.8px;line-height:10.8px;color:#000;letter-spacing:0.1px">22.08.2024</div>
<div class="t" style="left:999px;width:400px;text-align:right;top:535.86px;font-size:10.8px;line-height:10.8px;color:#000;letter-spacing:0.2px">1.481,25</div>
<div style="left:781px;top:549px;width:621px;height:17px;background:#f0f4fa;"></div>
<div style="left:770px;top:549px;width:11px;height:17px;background:#e6edf6;border-bottom:1px solid #9fb5d1;"></div>
<div style="left:781px;top:549px;width:1px;height:17px;background:#b6d0f0;"></div>
<div style="left:899px;top:549px;width:1px;height:17px;background:#b6d0f0;"></div>
<div style="left:1046px;top:549px;width:1px;height:17px;background:#b6d0f0;"></div>
<div style="left:1224px;top:549px;width:1px;height:17px;background:#b6d0f0;"></div>
<svg style="position:absolute;left:788px;top:554px" width="6" height="8" viewBox="0 0 6 8"><path d="M1 1L4.5 4L1 7" fill="none" stroke="#46546f" stroke-width="1.6"/></svg>
<div class="t" style="left:805px;top:552.86px;font-size:10.8px;line-height:10.8px;color:#000;">234</div>
<div class="t" style="left:902px;top:552.86px;font-size:10.8px;line-height:10.8px;color:#000;letter-spacing:0.1px">21.08.2024</div>
<div class="t" style="left:999px;width:400px;text-align:right;top:552.86px;font-size:10.8px;line-height:10.8px;color:#000;letter-spacing:0.2px">847,50</div>
<div style="left:781px;top:566px;width:621px;height:17px;background:#fcfcf3;"></div>
<div style="left:770px;top:566px;width:11px;height:17px;background:#e6edf6;border-bottom:1px solid #9fb5d1;"></div>
<div style="left:781px;top:566px;width:1px;height:17px;background:#b6d0f0;"></div>
<div style="left:899px;top:566px;width:1px;height:17px;background:#b6d0f0;"></div>
<div style="left:1046px;top:566px;width:1px;height:17px;background:#b6d0f0;"></div>
<div style="left:1224px;top:566px;width:1px;height:17px;background:#b6d0f0;"></div>
<svg style="position:absolute;left:788px;top:571px" width="6" height="8" viewBox="0 0 6 8"><path d="M1 1L4.5 4L1 7" fill="none" stroke="#46546f" stroke-width="1.6"/></svg>
<div class="t" style="left:805px;top:569.86px;font-size:10.8px;line-height:10.8px;color:#000;">233</div>
<div class="t" style="left:902px;top:569.86px;font-size:10.8px;line-height:10.8px;color:#000;letter-spacing:0.1px">20.08.2024</div>
<div class="t" style="left:821px;width:400px;text-align:right;top:569.86px;font-size:10.8px;line-height:10.8px;color:#000;letter-spacing:0.2px">2.738,16</div>
<div class="t" style="left:999px;width:400px;text-align:right;top:569.86px;font-size:10.8px;line-height:10.8px;color:#000;letter-spacing:0.2px">956,81</div>
<div style="left:781px;top:583px;width:621px;height:17px;background:#f0f4fa;"></div>
<div style="left:770px;top:583px;width:11px;height:17px;background:#e6edf6;border-bottom:1px solid #9fb5d1;"></div>
<div style="left:781px;top:583px;width:1px;height:17px;background:#b6d0f0;"></div>
<div style="left:899px;top:583px;width:1px;height:17px;background:#b6d0f0;"></div>
<div style="left:1046px;top:583px;width:1px;height:17px;background:#b6d0f0;"></div>
<div style="left:1224px;top:583px;width:1px;height:17px;background:#b6d0f0;"></div>
<svg style="position:absolute;left:788px;top:588px" width="6" height="8" viewBox="0 0 6 8"><path d="M1 1L4.5 4L1 7" fill="none" stroke="#46546f" stroke-width="1.6"/></svg>
<div class="t" style="left:805px;top:586.86px;font-size:10.8px;line-height:10.8px;color:#000;">232</div>
<div class="t" style="left:902px;top:586.86px;font-size:10.8px;line-height:10.8px;color:#000;letter-spacing:0.1px">19.08.2024</div>
<div class="t" style="left:999px;width:400px;text-align:right;top:586.86px;font-size:10.8px;line-height:10.8px;color:#000;letter-spacing:0.2px">1.197,50</div>
<div style="left:781px;top:600px;width:621px;height:17px;background:#fcfcf3;"></div>
<div style="left:770px;top:600px;width:11px;height:17px;background:#e6edf6;border-bottom:1px solid #9fb5d1;"></div>
<div style="left:781px;top:600px;width:1px;height:17px;background:#b6d0f0;"></div>
<div style="left:899px;top:600px;width:1px;height:17px;background:#b6d0f0;"></div>
<div style="left:1046px;top:600px;width:1px;height:17px;background:#b6d0f0;"></div>
<div style="left:1224px;top:600px;width:1px;height:17px;background:#b6d0f0;"></div>
<svg style="position:absolute;left:788px;top:605px" width="6" height="8" viewBox="0 0 6 8"><path d="M1 1L4.5 4L1 7" fill="none" stroke="#46546f" stroke-width="1.6"/></svg>
<div class="t" style="left:805px;top:603.86px;font-size:10.8px;line-height:10.8px;color:#000;">229</div>
<div class="t" style="left:902px;top:603.86px;font-size:10.8px;line-height:10.8px;color:#000;letter-spacing:0.1px">16.08.2024</div>
<div class="t" style="left:821px;width:400px;text-align:right;top:603.86px;font-size:10.8px;line-height:10.8px;color:#000;letter-spacing:0.2px">1.614,89</div>
<div class="t" style="left:999px;width:400px;text-align:right;top:603.86px;font-size:10.8px;line-height:10.8px;color:#000;letter-spacing:0.2px">1.576,25</div>
<div style="left:781px;top:617px;width:621px;height:17px;background:#f0f4fa;"></div>
<div style="left:770px;top:617px;width:11px;height:17px;background:#e6edf6;border-bottom:1px solid #9fb5d1;"></div>
<div style="left:781px;top:617px;width:1px;height:17px;background:#b6d0f0;"></div>
<div style="left:899px;top:617px;width:1px;height:17px;background:#b6d0f0;"></div>
<div style="left:1046px;top:617px;width:1px;height:17px;background:#b6d0f0;"></div>
<div style="left:1224px;top:617px;width:1px;height:17px;background:#b6d0f0;"></div>
<svg style="position:absolute;left:788px;top:622px" width="6" height="8" viewBox="0 0 6 8"><path d="M1 1L4.5 4L1 7" fill="none" stroke="#46546f" stroke-width="1.6"/></svg>
<div class="t" style="left:805px;top:620.86px;font-size:10.8px;line-height:10.8px;color:#000;">227</div>
<div class="t" style="left:902px;top:620.86px;font-size:10.8px;line-height:10.8px;color:#000;letter-spacing:0.1px">14.08.2024</div>
<div class="t" style="left:999px;width:400px;text-align:right;top:620.86px;font-size:10.8px;line-height:10.8px;color:#000;letter-spacing:0.2px">709,75</div>
<div style="left:781px;top:634px;width:621px;height:17px;background:#fcfcf3;"></div>
<div style="left:770px;top:634px;width:11px;height:17px;background:#e6edf6;border-bottom:1px solid #9fb5d1;"></div>
<div style="left:781px;top:634px;width:1px;height:17px;background:#b6d0f0;"></div>
<div style="left:899px;top:634px;width:1px;height:17px;background:#b6d0f0;"></div>
<div style="left:1046px;top:634px;width:1px;height:17px;background:#b6d0f0;"></div>
<div style="left:1224px;top:634px;width:1px;height:17px;background:#b6d0f0;"></div>
<svg style="position:absolute;left:788px;top:639px" width="6" height="8" viewBox="0 0 6 8"><path d="M1 1L4.5 4L1 7" fill="none" stroke="#46546f" stroke-width="1.6"/></svg>
<div class="t" style="left:805px;top:637.86px;font-size:10.8px;line-height:10.8px;color:#000;">226</div>
<div class="t" style="left:902px;top:637.86px;font-size:10.8px;line-height:10.8px;color:#000;letter-spacing:0.1px">13.08.2024</div>
<div class="t" style="left:999px;width:400px;text-align:right;top:637.86px;font-size:10.8px;line-height:10.8px;color:#000;letter-spacing:0.2px">486,25</div>
<div style="left:781px;top:651px;width:621px;height:17px;background:#f0f4fa;"></div>
<div style="left:770px;top:651px;width:11px;height:17px;background:#e6edf6;border-bottom:1px solid #9fb5d1;"></div>
<div style="left:781px;top:651px;width:1px;height:17px;background:#b6d0f0;"></div>
<div style="left:899px;top:651px;width:1px;height:17px;background:#b6d0f0;"></div>
<div style="left:1046px;top:651px;width:1px;height:17px;background:#b6d0f0;"></div>
<div style="left:1224px;top:651px;width:1px;height:17px;background:#b6d0f0;"></div>
<svg style="position:absolute;left:788px;top:656px" width="6" height="8" viewBox="0 0 6 8"><path d="M1 1L4.5 4L1 7" fill="none" stroke="#46546f" stroke-width="1.6"/></svg>
<div class="t" style="left:805px;top:654.86px;font-size:10.8px;line-height:10.8px;color:#000;">225</div>
<div class="t" style="left:902px;top:654.86px;font-size:10.8px;line-height:10.8px;color:#000;letter-spacing:0.1px">12.08.2024</div>
<div class="t" style="left:999px;width:400px;text-align:right;top:654.86px;font-size:10.8px;line-height:10.8px;color:#000;letter-spacing:0.2px">806,66</div>
<div style="left:781px;top:668px;width:621px;height:17px;background:#fcfcf3;"></div>
<div style="left:770px;top:668px;width:11px;height:17px;background:#e6edf6;border-bottom:1px solid #9fb5d1;"></div>
<div style="left:781px;top:668px;width:1px;height:17px;background:#b6d0f0;"></div>
<div style="left:899px;top:668px;width:1px;height:17px;background:#b6d0f0;"></div>
<div style="left:1046px;top:668px;width:1px;height:17px;background:#b6d0f0;"></div>
<div style="left:1224px;top:668px;width:1px;height:17px;background:#b6d0f0;"></div>
<svg style="position:absolute;left:788px;top:673px" width="6" height="8" viewBox="0 0 6 8"><path d="M1 1L4.5 4L1 7" fill="none" stroke="#46546f" stroke-width="1.6"/></svg>
<div class="t" style="left:805px;top:671.86px;font-size:10.8px;line-height:10.8px;color:#000;">223</div>
<div class="t" style="left:902px;top:671.86px;font-size:10.8px;line-height:10.8px;color:#000;letter-spacing:0.1px">10.08.2024</div>
<div class="t" style="left:999px;width:400px;text-align:right;top:671.86px;font-size:10.8px;line-height:10.8px;color:#000;letter-spacing:0.2px">103,75</div>
<div style="left:781px;top:685px;width:621px;height:17px;background:#f0f4fa;"></div>
<div style="left:770px;top:685px;width:11px;height:17px;background:#e6edf6;border-bottom:1px solid #9fb5d1;"></div>
<div style="left:781px;top:685px;width:1px;height:17px;background:#b6d0f0;"></div>
<div style="left:899px;top:685px;width:1px;height:17px;background:#b6d0f0;"></div>
<div style="left:1046px;top:685px;width:1px;height:17px;background:#b6d0f0;"></div>
<div style="left:1224px;top:685px;width:1px;height:17px;background:#b6d0f0;"></div>
<svg style="position:absolute;left:788px;top:690px" width="6" height="8" viewBox="0 0 6 8"><path d="M1 1L4.5 4L1 7" fill="none" stroke="#46546f" stroke-width="1.6"/></svg>
<div class="t" style="left:805px;top:688.86px;font-size:10.8px;line-height:10.8px;color:#000;">222</div>
<div class="t" style="left:902px;top:688.86px;font-size:10.8px;line-height:10.8px;color:#000;letter-spacing:0.1px">09.08.2024</div>
<div class="t" style="left:999px;width:400px;text-align:right;top:688.86px;font-size:10.8px;line-height:10.8px;color:#000;letter-spacing:0.2px">465,00</div>
<div style="left:781px;top:702px;width:621px;height:17px;background:#fcfcf3;"></div>
<div style="left:770px;top:702px;width:11px;height:17px;background:#e6edf6;border-bottom:1px solid #9fb5d1;"></div>
<div style="left:781px;top:702px;width:1px;height:17px;background:#b6d0f0;"></div>
<div style="left:899px;top:702px;width:1px;height:17px;background:#b6d0f0;"></div>
<div style="left:1046px;top:702px;width:1px;height:17px;background:#b6d0f0;"></div>
<div style="left:1224px;top:702px;width:1px;height:17px;background:#b6d0f0;"></div>
<svg style="position:absolute;left:788px;top:707px" width="6" height="8" viewBox="0 0 6 8"><path d="M1 1L4.5 4L1 7" fill="none" stroke="#46546f" stroke-width="1.6"/></svg>
<div class="t" style="left:805px;top:705.86px;font-size:10.8px;line-height:10.8px;color:#000;">221</div>
<div class="t" style="left:902px;top:705.86px;font-size:10.8px;line-height:10.8px;color:#000;letter-spacing:0.1px">08.08.2024</div>
<div class="t" style="left:999px;width:400px;text-align:right;top:705.86px;font-size:10.8px;line-height:10.8px;color:#000;letter-spacing:0.2px">1.045,00</div>
<div style="left:781px;top:719px;width:621px;height:17px;background:#f0f4fa;"></div>
<div style="left:770px;top:719px;width:11px;height:17px;background:#e6edf6;border-bottom:1px solid #9fb5d1;"></div>
<div style="left:781px;top:719px;width:1px;height:17px;background:#b6d0f0;"></div>
<div style="left:899px;top:719px;width:1px;height:17px;background:#b6d0f0;"></div>
<div style="left:1046px;top:719px;width:1px;height:17px;background:#b6d0f0;"></div>
<div style="left:1224px;top:719px;width:1px;height:17px;background:#b6d0f0;"></div>
<svg style="position:absolute;left:788px;top:724px" width="6" height="8" viewBox="0 0 6 8"><path d="M1 1L4.5 4L1 7" fill="none" stroke="#46546f" stroke-width="1.6"/></svg>
<div class="t" style="left:805px;top:722.86px;font-size:10.8px;line-height:10.8px;color:#000;">220</div>
<div class="t" style="left:902px;top:722.86px;font-size:10.8px;line-height:10.8px;color:#000;letter-spacing:0.1px">07.08.2024</div>
<div class="t" style="left:999px;width:400px;text-align:right;top:722.86px;font-size:10.8px;line-height:10.8px;color:#000;letter-spacing:0.2px">2.221,48</div>
<div style="left:781px;top:736px;width:621px;height:17px;background:#fcfcf3;"></div>
<div style="left:770px;top:736px;width:11px;height:17px;background:#e6edf6;border-bottom:1px solid #9fb5d1;"></div>
<div style="left:781px;top:736px;width:1px;height:17px;background:#b6d0f0;"></div>
<div style="left:899px;top:736px;width:1px;height:17px;background:#b6d0f0;"></div>
<div style="left:1046px;top:736px;width:1px;height:17px;background:#b6d0f0;"></div>
<div style="left:1224px;top:736px;width:1px;height:17px;background:#b6d0f0;"></div>
<svg style="position:absolute;left:788px;top:741px" width="6" height="8" viewBox="0 0 6 8"><path d="M1 1L4.5 4L1 7" fill="none" stroke="#46546f" stroke-width="1.6"/></svg>
<div class="t" style="left:805px;top:739.86px;font-size:10.8px;line-height:10.8px;color:#000;">219</div>
<div class="t" style="left:902px;top:739.86px;font-size:10.8px;line-height:10.8px;color:#000;letter-spacing:0.1px">06.08.2024</div>
<div class="t" style="left:999px;width:400px;text-align:right;top:739.86px;font-size:10.8px;line-height:10.8px;color:#000;letter-spacing:0.2px">817,50</div>
<div style="left:781px;top:753px;width:621px;height:17px;background:#f0f4fa;"></div>
<div style="left:770px;top:753px;width:11px;height:17px;background:#e6edf6;border-bottom:1px solid #9fb5d1;"></div>
<div style="left:781px;top:753px;width:1px;height:17px;background:#b6d0f0;"></div>
<div style="left:899px;top:753px;width:1px;height:17px;background:#b6d0f0;"></div>
<div style="left:1046px;top:753px;width:1px;height:17px;background:#b6d0f0;"></div>
<div style="left:1224px;top:753px;width:1px;height:17px;background:#b6d0f0;"></div>
<svg style="position:absolute;left:788px;top:758px" width="6" height="8" viewBox="0 0 6 8"><path d="M1 1L4.5 4L1 7" fill="none" stroke="#46546f" stroke-width="1.6"/></svg>
<div class="t" style="left:805px;top:756.86px;font-size:10.8px;line-height:10.8px;color:#000;">215</div>
<div class="t" style="left:902px;top:756.86px;font-size:10.8px;line-height:10.8px;color:#000;letter-spacing:0.1px">02.08.2024</div>
<div class="t" style="left:821px;width:400px;text-align:right;top:756.86px;font-size:10.8px;line-height:10.8px;color:#000;letter-spacing:0.2px">1.634,72</div>
<div class="t" style="left:999px;width:400px;text-align:right;top:756.86px;font-size:10.8px;line-height:10.8px;color:#000;letter-spacing:0.2px">1.080,14</div>
<div style="left:781px;top:770px;width:621px;height:17px;background:#fcfcf3;"></div>
<div style="left:770px;top:770px;width:11px;height:17px;background:#e6edf6;border-bottom:1px solid #9fb5d1;"></div>
<div style="left:781px;top:770px;width:1px;height:17px;background:#b6d0f0;"></div>
<div style="left:899px;top:770px;width:1px;height:17px;background:#b6d0f0;"></div>
<div style="left:1046px;top:770px;width:1px;height:17px;background:#b6d0f0;"></div>
<div style="left:1224px;top:770px;width:1px;height:17px;background:#b6d0f0;"></div>
<svg style="position:absolute;left:788px;top:775px" width="6" height="8" viewBox="0 0 6 8"><path d="M1 1L4.5 4L1 7" fill="none" stroke="#46546f" stroke-width="1.6"/></svg>
<div class="t" style="left:805px;top:773.86px;font-size:10.8px;line-height:10.8px;color:#000;">214</div>
<div class="t" style="left:902px;top:773.86px;font-size:10.8px;line-height:10.8px;color:#000;letter-spacing:0.1px">01.08.2024</div>
<div class="t" style="left:821px;width:400px;text-align:right;top:773.86px;font-size:10.8px;line-height:10.8px;color:#000;letter-spacing:0.2px">12.664,41</div>
<div class="t" style="left:999px;width:400px;text-align:right;top:773.86px;font-size:10.8px;line-height:10.8px;color:#000;letter-spacing:0.2px">2.197,58</div>
<div style="left:781px;top:787px;width:621px;height:17px;background:#f0f4fa;"></div>
<div style="left:770px;top:787px;width:11px;height:17px;background:#e6edf6;border-bottom:1px solid #9fb5d1;"></div>
<div style="left:781px;top:787px;width:1px;height:17px;background:#b6d0f0;"></div>
<div style="left:899px;top:787px;width:1px;height:17px;background:#b6d0f0;"></div>
<div style="left:1046px;top:787px;width:1px;height:17px;background:#b6d0f0;"></div>
<div style="left:1224px;top:787px;width:1px;height:17px;background:#b6d0f0;"></div>
<svg style="position:absolute;left:788px;top:792px" width="6" height="8" viewBox="0 0 6 8"><path d="M1 1L4.5 4L1 7" fill="none" stroke="#46546f" stroke-width="1.6"/></svg>
<div class="t" style="left:805px;top:790.86px;font-size:10.8px;line-height:10.8px;color:#000;">213</div>
<div class="t" style="left:902px;top:790.86px;font-size:10.8px;line-height:10.8px;color:#000;letter-spacing:0.1px">31.07.2024</div>
<div class="t" style="left:999px;width:400px;text-align:right;top:790.86px;font-size:10.8px;line-height:10.8px;color:#000;letter-spacing:0.2px">450,00</div>
<div style="left:781px;top:804px;width:621px;height:17px;background:#fcfcf3;"></div>
<div style="left:770px;top:804px;width:11px;height:17px;background:#e6edf6;border-bottom:1px solid #9fb5d1;"></div>
<div style="left:781px;top:804px;width:1px;height:17px;background:#b6d0f0;"></div>
<div style="left:899px;top:804px;width:1px;height:17px;background:#b6d0f0;"></div>
<div style="left:1046px;top:804px;width:1px;height:17px;background:#b6d0f0;"></div>
<div style="left:1224px;top:804px;width:1px;height:17px;background:#b6d0f0;"></div>
<svg style="position:absolute;left:788px;top:809px" width="6" height="8" viewBox="0 0 6 8"><path d="M1 1L4.5 4L1 7" fill="none" stroke="#46546f" stroke-width="1.6"/></svg>
<div class="t" style="left:805px;top:807.86px;font-size:10.8px;line-height:10.8px;color:#000;">212</div>
<div class="t" style="left:902px;top:807.86px;font-size:10.8px;line-height:10.8px;color:#000;letter-spacing:0.1px">30.07.2024</div>
<div class="t" style="left:821px;width:400px;text-align:right;top:807.86px;font-size:10.8px;line-height:10.8px;color:#000;letter-spacing:0.2px">6.370,72</div>
<div style="left:781px;top:821px;width:621px;height:17px;background:#f0f4fa;"></div>
<div style="left:770px;top:821px;width:11px;height:17px;background:#e6edf6;border-bottom:1px solid #9fb5d1;"></div>
<div style="left:781px;top:821px;width:1px;height:17px;background:#b6d0f0;"></div>
<div style="left:899px;top:821px;width:1px;height:17px;background:#b6d0f0;"></div>
<div style="left:1046px;top:821px;width:1px;height:17px;background:#b6d0f0;"></div>
<div style="left:1224px;top:821px;width:1px;height:17px;background:#b6d0f0;"></div>
<svg style="position:absolute;left:788px;top:826px" width="6" height="8" viewBox="0 0 6 8"><path d="M1 1L4.5 4L1 7" fill="none" stroke="#46546f" stroke-width="1.6"/></svg>
<div class="t" style="left:805px;top:824.86px;font-size:10.8px;line-height:10.8px;color:#000;">211</div>
<div class="t" style="left:902px;top:824.86px;font-size:10.8px;line-height:10.8px;color:#000;letter-spacing:0.1px">29.07.2024</div>
<div class="t" style="left:999px;width:400px;text-align:right;top:824.86px;font-size:10.8px;line-height:10.8px;color:#000;letter-spacing:0.2px">507,50</div>
<div style="left:781px;top:838px;width:621px;height:17px;background:#fcfcf3;"></div>
<div style="left:770px;top:838px;width:11px;height:17px;background:#e6edf6;border-bottom:1px solid #9fb5d1;"></div>
<div style="left:781px;top:838px;width:1px;height:17px;background:#b6d0f0;"></div>
<div style="left:899px;top:838px;width:1px;height:17px;background:#b6d0f0;"></div>
<div style="left:1046px;top:838px;width:1px;height:17px;background:#b6d0f0;"></div>
<div style="left:1224px;top:838px;width:1px;height:17px;background:#b6d0f0;"></div>
<svg style="position:absolute;left:788px;top:843px" width="6" height="8" viewBox="0 0 6 8"><path d="M1 1L4.5 4L1 7" fill="none" stroke="#46546f" stroke-width="1.6"/></svg>
<div class="t" style="left:805px;top:841.86px;font-size:10.8px;line-height:10.8px;color:#000;">208</div>
<div class="t" style="left:902px;top:841.86px;font-size:10.8px;line-height:10.8px;color:#000;letter-spacing:0.1px">26.07.2024</div>
<div class="t" style="left:999px;width:400px;text-align:right;top:841.86px;font-size:10.8px;line-height:10.8px;color:#000;letter-spacing:0.2px">1.450,88</div>
<div style="left:781px;top:855px;width:621px;height:17px;background:#f0f4fa;"></div>
<div style="left:770px;top:855px;width:11px;height:17px;background:#e6edf6;border-bottom:1px solid #9fb5d1;"></div>
<div style="left:781px;top:855px;width:1px;height:17px;background:#b6d0f0;"></div>
<div style="left:899px;top:855px;width:1px;height:17px;background:#b6d0f0;"></div>
<div style="left:1046px;top:855px;width:1px;height:17px;background:#b6d0f0;"></div>
<div style="left:1224px;top:855px;width:1px;height:17px;background:#b6d0f0;"></div>
<svg style="position:absolute;left:788px;top:860px" width="6" height="8" viewBox="0 0 6 8"><path d="M1 1L4.5 4L1 7" fill="none" stroke="#46546f" stroke-width="1.6"/></svg>
<div class="t" style="left:805px;top:858.86px;font-size:10.8px;line-height:10.8px;color:#000;">206</div>
<div class="t" style="left:902px;top:858.86px;font-size:10.8px;line-height:10.8px;color:#000;letter-spacing:0.1px">24.07.2024</div>
<div class="t" style="left:999px;width:400px;text-align:right;top:858.86px;font-size:10.8px;line-height:10.8px;color:#000;letter-spacing:0.2px">996,50</div>
<div style="left:781px;top:872px;width:621px;height:17px;background:#fcfcf3;"></div>
<div style="left:770px;top:872px;width:11px;height:17px;background:#e6edf6;border-bottom:1px solid #9fb5d1;"></div>
<div style="left:781px;top:872px;width:1px;height:17px;background:#b6d0f0;"></div>
<div style="left:899px;top:872px;width:1px;height:17px;background:#b6d0f0;"></div>
<div style="left:1046px;top:872px;width:1px;height:17px;background:#b6d0f0;"></div>
<div style="left:1224px;top:872px;width:1px;height:17px;background:#b6d0f0;"></div>
<svg style="position:absolute;left:788px;top:877px" width="6" height="8" viewBox="0 0 6 8"><path d="M1 1L4.5 4L1 7" fill="none" stroke="#46546f" stroke-width="1.6"/></svg>
<div class="t" style="left:805px;top:875.86px;font-size:10.8px;line-height:10.8px;color:#000;">205</div>
<div class="t" style="left:902px;top:875.86px;font-size:10.8px;line-height:10.8px;color:#000;letter-spacing:0.1px">23.07.2024</div>
<div class="t" style="left:999px;width:400px;text-align:right;top:875.86px;font-size:10.8px;line-height:10.8px;color:#000;letter-spacing:0.2px">165,86</div>
<div style="left:781px;top:889px;width:621px;height:17px;background:#f0f4fa;"></div>
<div style="left:770px;top:889px;width:11px;height:17px;background:#e6edf6;border-bottom:1px solid #9fb5d1;"></div>
<div style="left:781px;top:889px;width:1px;height:17px;background:#b6d0f0;"></div>
<div style="left:899px;top:889px;width:1px;height:17px;background:#b6d0f0;"></div>
<div style="left:1046px;top:889px;width:1px;height:17px;background:#b6d0f0;"></div>
<div style="left:1224px;top:889px;width:1px;height:17px;background:#b6d0f0;"></div>
<svg style="position:absolute;left:788px;top:894px" width="6" height="8" viewBox="0 0 6 8"><path d="M1 1L4.5 4L1 7" fill="none" stroke="#46546f" stroke-width="1.6"/></svg>
<div class="t" style="left:805px;top:892.86px;font-size:10.8px;line-height:10.8px;color:#000;">204</div>
<div class="t" style="left:902px;top:892.86px;font-size:10.8px;line-height:10.8px;color:#000;letter-spacing:0.1px">22.07.2024</div>
<div class="t" style="left:821px;width:400px;text-align:right;top:892.86px;font-size:10.8px;line-height:10.8px;color:#000;letter-spacing:0.2px">1.070,00</div>
<div class="t" style="left:999px;width:400px;text-align:right;top:892.86px;font-size:10.8px;line-height:10.8px;color:#000;letter-spacing:0.2px">1.145,00</div>
<div style="left:781px;top:906px;width:621px;height:17px;background:#fcfcf3;"></div>
<div style="left:770px;top:906px;width:11px;height:17px;background:#e6edf6;border-bottom:1px solid #9fb5d1;"></div>
<div style="left:781px;top:906px;width:1px;height:17px;background:#b6d0f0;"></div>
<div style="left:899px;top:906px;width:1px;height:17px;background:#b6d0f0;"></div>
<div style="left:1046px;top:906px;width:1px;height:17px;background:#b6d0f0;"></div>
<div style="left:1224px;top:906px;width:1px;height:17px;background:#b6d0f0;"></div>
<svg style="position:absolute;left:788px;top:911px" width="6" height="8" viewBox="0 0 6 8"><path d="M1 1L4.5 4L1 7" fill="none" stroke="#46546f" stroke-width="1.6"/></svg>
<div class="t" style="left:805px;top:909.86px;font-size:10.8px;line-height:10.8px;color:#000;">202</div>
<div class="t" style="left:902px;top:909.86px;font-size:10.8px;line-height:10.8px;color:#000;letter-spacing:0.1px">20.07.2024</div>
<div class="t" style="left:999px;width:400px;text-align:right;top:909.86px;font-size:10.8px;line-height:10.8px;color:#000;letter-spacing:0.2px">245,00</div>
<div style="left:781px;top:923px;width:621px;height:17px;background:#f0f4fa;"></div>
<div style="left:770px;top:923px;width:11px;height:17px;background:#e6edf6;border-bottom:1px solid #9fb5d1;"></div>
<div style="left:781px;top:923px;width:1px;height:17px;background:#b6d0f0;"></div>
<div style="left:899px;top:923px;width:1px;height:17px;background:#b6d0f0;"></div>
<div style="left:1046px;top:923px;width:1px;height:17px;background:#b6d0f0;"></div>
<div style="left:1224px;top:923px;width:1px;height:17px;background:#b6d0f0;"></div>
<svg style="position:absolute;left:788px;top:928px" width="6" height="8" viewBox="0 0 6 8"><path d="M1 1L4.5 4L1 7" fill="none" stroke="#46546f" stroke-width="1.6"/></svg>
<div class="t" style="left:805px;top:926.86px;font-size:10.8px;line-height:10.8px;color:#000;">201</div>
<div class="t" style="left:902px;top:926.86px;font-size:10.8px;line-height:10.8px;color:#000;letter-spacing:0.1px">19.07.2024</div>
<div class="t" style="left:999px;width:400px;text-align:right;top:926.86px;font-size:10.8px;line-height:10.8px;color:#000;letter-spacing:0.2px">1.813,06</div>
<div style="left:781px;top:940px;width:621px;height:17px;background:#fcfcf3;"></div>
<div style="left:770px;top:940px;width:11px;height:17px;background:#e6edf6;border-bottom:1px solid #9fb5d1;"></div>
<div style="left:781px;top:940px;width:1px;height:17px;background:#b6d0f0;"></div>
<div style="left:899px;top:940px;width:1px;height:17px;background:#b6d0f0;"></div>
<div style="left:1046px;top:940px;width:1px;height:17px;background:#b6d0f0;"></div>
<div style="left:1224px;top:940px;width:1px;height:17px;background:#b6d0f0;"></div>
<svg style="position:absolute;left:788px;top:945px" width="6" height="8" viewBox="0 0 6 8"><path d="M1 1L4.5 4L1 7" fill="none" stroke="#46546f" stroke-width="1.6"/></svg>
<div class="t" style="left:805px;top:943.86px;font-size:10.8px;line-height:10.8px;color:#000;">200</div>
<div class="t" style="left:902px;top:943.86px;font-size:10.8px;line-height:10.8px;color:#000;letter-spacing:0.1px">18.07.2024</div>
<div class="t" style="left:999px;width:400px;text-align:right;top:943.86px;font-size:10.8px;line-height:10.8px;color:#000;letter-spacing:0.2px">924,87</div>
<div style="left:781px;top:957px;width:621px;height:17px;background:#f0f4fa;"></div>
<div style="left:770px;top:957px;width:11px;height:17px;background:#e6edf6;border-bottom:1px solid #9fb5d1;"></div>
<div style="left:781px;top:957px;width:1px;height:17px;background:#b6d0f0;"></div>
<div style="left:899px;top:957px;width:1px;height:17px;background:#b6d0f0;"></div>
<div style="left:1046px;top:957px;width:1px;height:17px;background:#b6d0f0;"></div>
<div style="left:1224px;top:957px;width:1px;height:17px;background:#b6d0f0;"></div>
<svg style="position:absolute;left:788px;top:962px" width="6" height="8" viewBox="0 0 6 8"><path d="M1 1L4.5 4L1 7" fill="none" stroke="#46546f" stroke-width="1.6"/></svg>
<div class="t" style="left:805px;top:960.86px;font-size:10.8px;line-height:10.8px;color:#000;">199</div>
<div class="t" style="left:902px;top:960.86px;font-size:10.8px;line-height:10.8px;color:#000;letter-spacing:0.1px">17.07.2024</div>
<div class="t" style="left:999px;width:400px;text-align:right;top:960.86px;font-size:10.8px;line-height:10.8px;color:#000;letter-spacing:0.2px">107,50</div>
<div style="left:781px;top:974px;width:621px;height:17px;background:#fcfcf3;"></div>
<div style="left:770px;top:974px;width:11px;height:17px;background:#e6edf6;border-bottom:1px solid #9fb5d1;"></div>
<div style="left:781px;top:974px;width:1px;height:17px;background:#b6d0f0;"></div>
<div style="left:899px;top:974px;width:1px;height:17px;background:#b6d0f0;"></div>
<div style="left:1046px;top:974px;width:1px;height:17px;background:#b6d0f0;"></div>
<div style="left:1224px;top:974px;width:1px;height:17px;background:#b6d0f0;"></div>
<svg style="position:absolute;left:788px;top:979px" width="6" height="8" viewBox="0 0 6 8"><path d="M1 1L4.5 4L1 7" fill="none" stroke="#46546f" stroke-width="1.6"/></svg>
<div class="t" style="left:805px;top:977.86px;font-size:10.8px;line-height:10.8px;color:#000;">198</div>
<div class="t" style="left:902px;top:977.86px;font-size:10.8px;line-height:10.8px;color:#000;letter-spacing:0.1px">16.07.2024</div>
<div class="t" style="left:999px;width:400px;text-align:right;top:977.86px;font-size:10.8px;line-height:10.8px;color:#000;letter-spacing:0.2px">1.998,75</div>
<div style="left:781px;top:991px;width:621px;height:17px;background:#f0f4fa;"></div>
<div style="left:770px;top:991px;width:11px;height:17px;background:#e6edf6;border-bottom:1px solid #9fb5d1;"></div>
<div style="left:781px;top:991px;width:1px;height:17px;background:#b6d0f0;"></div>
<div style="left:899px;top:991px;width:1px;height:17px;background:#b6d0f0;"></div>
<div style="left:1046px;top:991px;width:1px;height:17px;background:#b6d0f0;"></div>
<div style="left:1224px;top:991px;width:1px;height:17px;background:#b6d0f0;"></div>
<svg style="position:absolute;left:788px;top:996px" width="6" height="8" viewBox="0 0 6 8"><path d="M1 1L4.5 4L1 7" fill="none" stroke="#46546f" stroke-width="1.6"/></svg>
<div class="t" style="left:805px;top:994.86px;font-size:10.8px;line-height:10.8px;color:#000;">197</div>
<div class="t" style="left:902px;top:994.86px;font-size:10.8px;line-height:10.8px;color:#000;letter-spacing:0.1px">15.07.2024</div>
<div class="t" style="left:999px;width:400px;text-align:right;top:994.86px;font-size:10.8px;line-height:10.8px;color:#000;letter-spacing:0.2px">1.330,00</div>
<div style="left:781px;top:1008px;width:621px;height:17px;background:#fcfcf3;"></div>
<div style="left:770px;top:1008px;width:11px;height:17px;background:#e6edf6;border-bottom:1px solid #9fb5d1;"></div>
<div style="left:781px;top:1008px;width:1px;height:17px;background:#b6d0f0;"></div>
<div style="left:899px;top:1008px;width:1px;height:17px;background:#b6d0f0;"></div>
<div style="left:1046px;top:1008px;width:1px;height:17px;background:#b6d0f0;"></div>
<div style="left:1224px;top:1008px;width:1px;height:17px;background:#b6d0f0;"></div>
<svg style="position:absolute;left:788px;top:1013px" width="6" height="8" viewBox="0 0 6 8"><path d="M1 1L4.5 4L1 7" fill="none" stroke="#46546f" stroke-width="1.6"/></svg>
<div class="t" style="left:805px;top:1011.86px;font-size:10.8px;line-height:10.8px;color:#000;">196</div>
<div class="t" style="left:902px;top:1011.86px;font-size:10.8px;line-height:10.8px;color:#000;letter-spacing:0.1px">14.07.2024</div>
<div class="t" style="left:821px;width:400px;text-align:right;top:1011.86px;font-size:10.8px;line-height:10.8px;color:#000;letter-spacing:0.2px">150,23</div>
<div style="left:781px;top:1025px;width:621px;height:17px;background:#f0f4fa;"></div>
<div style="left:770px;top:1025px;width:11px;height:17px;background:#e6edf6;border-bottom:1px solid #9fb5d1;"></div>
<div style="left:781px;top:1025px;width:1px;height:17px;background:#b6d0f0;"></div>
<div style="left:899px;top:1025px;width:1px;height:17px;background:#b6d0f0;"></div>
<div style="left:1046px;top:1025px;width:1px;height:17px;background:#b6d0f0;"></div>
<div style="left:1224px;top:1025px;width:1px;height:17px;background:#b6d0f0;"></div>
<svg style="position:absolute;left:788px;top:1030px" width="6" height="8" viewBox="0 0 6 8"><path d="M1 1L4.5 4L1 7" fill="none" stroke="#46546f" stroke-width="1.6"/></svg>
<div class="t" style="left:805px;top:1028.86px;font-size:10.8px;line-height:10.8px;color:#000;">194</div>
<div class="t" style="left:902px;top:1028.86px;font-size:10.8px;line-height:10.8px;color:#000;letter-spacing:0.1px">12.07.2024</div>
<div class="t" style="left:999px;width:400px;text-align:right;top:1028.86px;font-size:10.8px;line-height:10.8px;color:#000;letter-spacing:0.2px">823,75</div>
<div style="left:780px;top:495px;width:1px;height:548px;background:#9fb5d1;"></div>
<div style="left:772px;top:519px;width:0;height:0;border-top:4px solid transparent;border-bottom:4px solid transparent;border-left:4px solid #000"></div>
<div style="left:1402px;top:496px;width:16px;height:547px;background:linear-gradient(90deg,#cddbec,#dae5f2);"></div>
<div style="left:1405px;top:501px;width:0;height:0;border-left:5px solid transparent;border-right:5px solid transparent;border-bottom:5px solid #4d5b7c"></div>
<div style="left:1403px;top:513px;width:14px;height:472px;background:linear-gradient(90deg,#e2eaf5,#d1deee);border:1px solid #a9bdd6;border-radius:3px;"></div>
<div style="left:1407px;top:743.0px;width:6px;height:1px;background:#8796ae;"></div>
<div style="left:1407px;top:745.5px;width:6px;height:1px;background:#8796ae;"></div>
<div style="left:1407px;top:748.0px;width:6px;height:1px;background:#8796ae;"></div>
<div style="left:1407px;top:750.5px;width:6px;height:1px;background:#8796ae;"></div>
<div style="left:1405px;top:1032px;width:0;height:0;border-left:5px solid transparent;border-right:5px solid transparent;border-top:5px solid #4d5b7c"></div>
<div class="btn" style="left:1359px;top:1051px;width:60px;height:30px;"></div>
<svg style="position:absolute;left:1366px;top:1055px" width="24" height="24" viewBox="0 0 24 24"><path d="M5 1H15L20 6V23H5Z" fill="#fff" stroke="#555" stroke-width="1"/><path d="M15 1V6H20" fill="none" stroke="#555"/><path d="M8 8H17M8 11H17M8 14H17" stroke="#888" stroke-width="0.8"/><path d="M2 21C6 16 9 10 8 6C7 10 12 17 16 17C11 16 5 20 2 21Z" fill="none" stroke="#d82d23" stroke-width="1.6"/></svg>
<div class="t" style="left:1392px;top:1060.69px;font-size:11px;line-height:11px;color:#1e395b;">PDF</div>
<div class="btn" style="left:1266px;top:1118px;width:85px;height:30px;"></div>
<svg style="position:absolute;left:1275px;top:1124px" width="22" height="18" viewBox="0 0 22 18"><path d="M2 8.5L8 14.5L20 2.5" fill="none" stroke="#3da66e" stroke-width="4"/></svg>
<div class="t" style="left:1302px;top:1127.86px;font-size:10.8px;line-height:10.8px;color:#1e395b;"><u>P</u>rihvati</div>
<div class="btn" style="left:1357px;top:1118px;width:85px;height:30px;"></div>
<svg style="position:absolute;left:1366px;top:1123px" width="21" height="20" viewBox="0 0 21 20"><path d="M3 3L18 17M18 3L3 17" stroke="#d9472b" stroke-width="4.2"/></svg>
<div class="t" style="left:1391px;top:1127.86px;font-size:10.8px;line-height:10.8px;color:#1e395b;"><u>O</u>dustani</div>
<div style="left:290px;top:421px;width:456px;height:204px;border:2.2px solid #ec0000;"></div>
<div style="left:755.5px;top:453.5px;width:113px;height:37px;border:2.2px solid #ec0000;"></div>
<div style="left:345.5px;top:67px;width:26px;height:26px;border-radius:50%;background:#ec0000;"></div>
<div class="t" style="left:58.80000000000001px;width:600px;text-align:center;top:70.49px;font-size:19.5px;line-height:19.5px;color:#fff;">1</div>
<div style="left:774px;top:112.5px;width:26px;height:26px;border-radius:50%;background:#ec0000;"></div>
<div class="t" style="left:487.29999999999995px;width:600px;text-align:center;top:115.99px;font-size:19.5px;line-height:19.5px;color:#fff;">2</div>
<div style="left:526px;top:410px;width:26px;height:26px;border-radius:50%;background:#ec0000;"></div>
<div class="t" style="left:239.29999999999995px;width:600px;text-align:center;top:413.49px;font-size:19.5px;line-height:19.5px;color:#fff;">3</div>
<div style="left:852px;top:142px;width:4px;height:245px;background:#ec0000;"></div>
<div style="left:848px;top:386px;width:0;height:0;border-left:6px solid transparent;border-right:6px solid transparent;border-top:11px solid #ec0000"></div>
<div style="left:351px;top:210px;width:352px;height:104px;background:#1c9df5;border-radius:3px;"></div>
<div class="t" style="left:227px;width:600px;text-align:center;top:241.52px;font-size:17.1px;line-height:17.1px;color:#fff;">klikom na Učitaj izvod ozvara se forma za</div>
<div class="t" style="left:226px;width:600px;text-align:center;top:264.52px;font-size:17.1px;line-height:17.1px;color:#fff;">odabir od kuda će se povuči podaci izvoda</div>
<svg style="position:absolute;left:0;top:0" width="1531" height="400" viewBox="0 0 1531 400"><path d="M648 212.5L801 146.5" stroke="#1c9df5" stroke-width="8"/><path d="M812 140.5L788 139L798.5 158Z" fill="#1c9df5"/></svg>
</body></html>
